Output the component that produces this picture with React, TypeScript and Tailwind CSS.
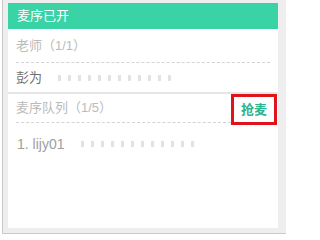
const font = { fontFamily: '"Liberation Sans", "Noto Sans CJK SC", sans-serif' };

function Dots({ count }: { count: number }) {
  return (
    <div className="flex items-center gap-[7px]">
      {Array.from({ length: count }).map((_, i) => (
        <span key={i} className="block h-[6px] w-[3px] bg-[#e2e2e2]" />
      ))}
    </div>
  );
}

export default function App() {
  return (
    <div className="h-[239px] w-[286px] bg-white" style={font}>
      <div className="ml-[2px] h-[234px] border-b border-l border-[#c9c9c9] bg-[#eeeeee] pb-[5px] pl-[5px] pr-[8px] pt-[3px]">
        <div className="flex h-full flex-col bg-white">
          <div className="flex h-[26px] items-center bg-[#3ad3a6] pl-[9px] text-[13px] text-white">
            麦序已开
          </div>

          <div className="mx-[8px]">
            <div className="flex h-[34px] items-center border-b border-dashed border-[#d4d4d4] text-[13px] text-[#bbbbbb]">
              老师（1/1）
            </div>
            <div className="flex h-[29px] items-center text-[13px] text-[#707070]">
              <span>彭为</span>
              <div className="ml-[16px]">
                <Dots count={12} />
              </div>
            </div>
          </div>

          <div className="h-[2px] bg-[#e6e6e6]" />

          <div className="flex pl-[8px] pr-[1px]">
            <div className="flex h-[29px] flex-1 items-center border-b border-dashed border-[#d4d4d4] text-[13px] text-[#bbbbbb]">
              麦序队列（1/5）
            </div>
            <button className="flex h-[31px] w-[46px] items-center justify-center border-[3px] border-[#e0121a] text-[13px] font-bold text-[#2db48e]">
              抢麦
            </button>
          </div>

          <div className="flex h-[38px] items-center pl-[9px] text-[14px] text-[#a0a0a0]">
            <span>1. lijy01</span>
            <div className="ml-[17px]">
              <Dots count={12} />
            </div>
          </div>
        </div>
      </div>
    </div>
  );
}
